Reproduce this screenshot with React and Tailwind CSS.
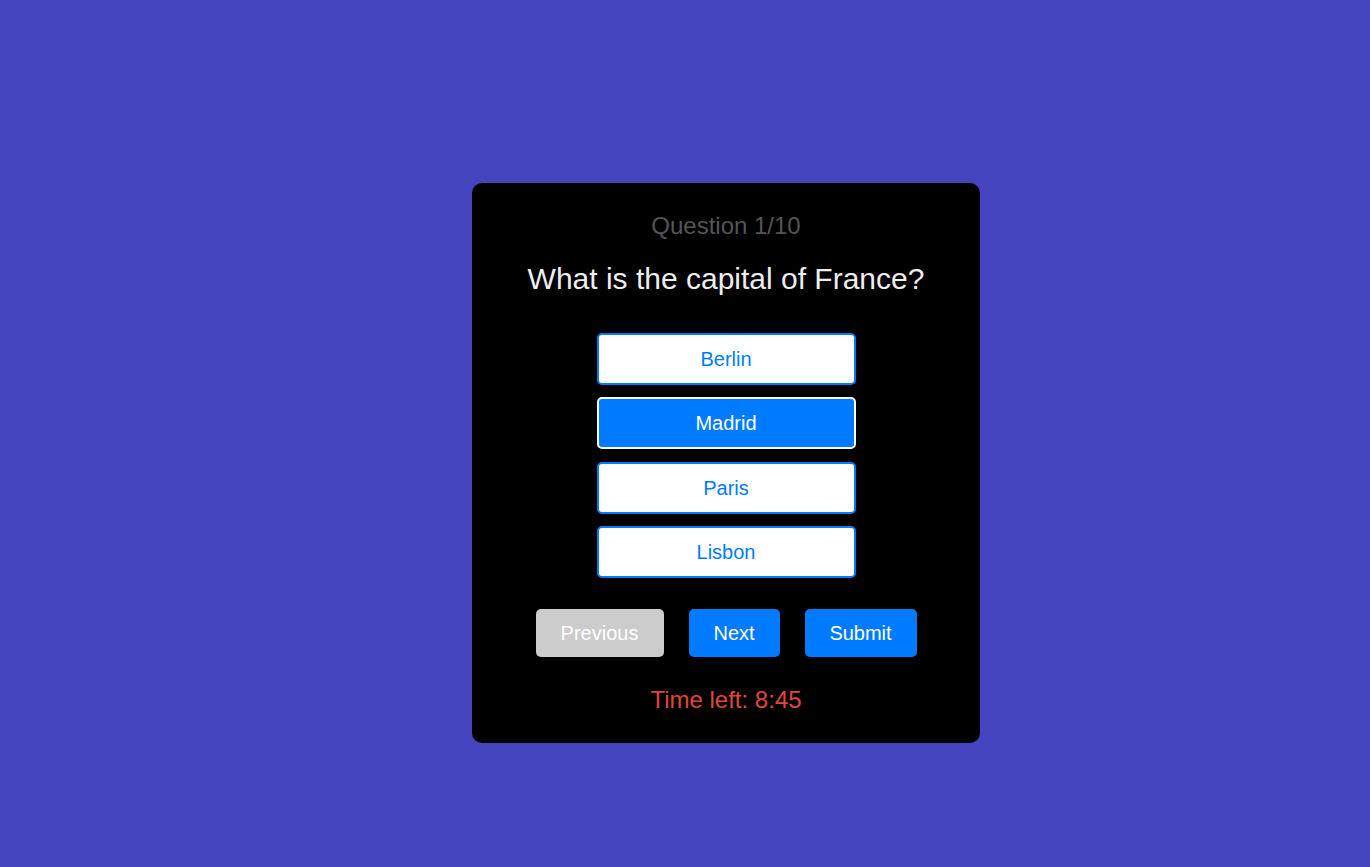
const options = ["Berlin", "Madrid", "Paris", "Lisbon"];

export default function App() {
  const selected = "Madrid";

  return (
    <div
      className="min-h-screen w-full bg-[#4444be] pt-[183px] pl-[472px]"
      style={{ fontFamily: '"Liberation Sans", Arial, sans-serif' }}
    >
      <div className="w-[508px] h-[560px] bg-black rounded-[10px] pt-[29px] flex flex-col items-center">
        <div className="text-[24px] leading-[27px] text-[#555555]">
          Question 1/10
        </div>
        <h2 className="mt-[23px] text-[30px] leading-[34px] text-[#eeeeee]">
          What is the capital of France?
        </h2>

        {/* Options */}
        <div className="mt-[37px] flex flex-col gap-[12.3px]">
          {options.map((opt) => (
            <button
              key={opt}
              className={`w-[259px] h-[52px] rounded-[5px] border-2 text-[20px] ${
                opt === selected
                  ? "bg-[#007bff] border-white text-white"
                  : "bg-white border-[#007bff] text-[#007bff]"
              }`}
            >
              {opt}
            </button>
          ))}
        </div>

        {/* Navigation */}
        <div className="mt-[31px] flex gap-[25px]">
          <button className="w-[128px] h-[48px] rounded-[5px] bg-[#cccccc] text-white text-[20px]">
            Previous
          </button>
          <button className="w-[91px] h-[48px] rounded-[5px] bg-[#007bff] text-white text-[20px]">
            Next
          </button>
          <button className="w-[112px] h-[48px] rounded-[5px] bg-[#007bff] text-white text-[20px]">
            Submit
          </button>
        </div>

        <div className="mt-[29px] text-[24px] leading-[27px] text-[#e0463c]">
          Time left: 8:45
        </div>
      </div>
    </div>
  );
}
